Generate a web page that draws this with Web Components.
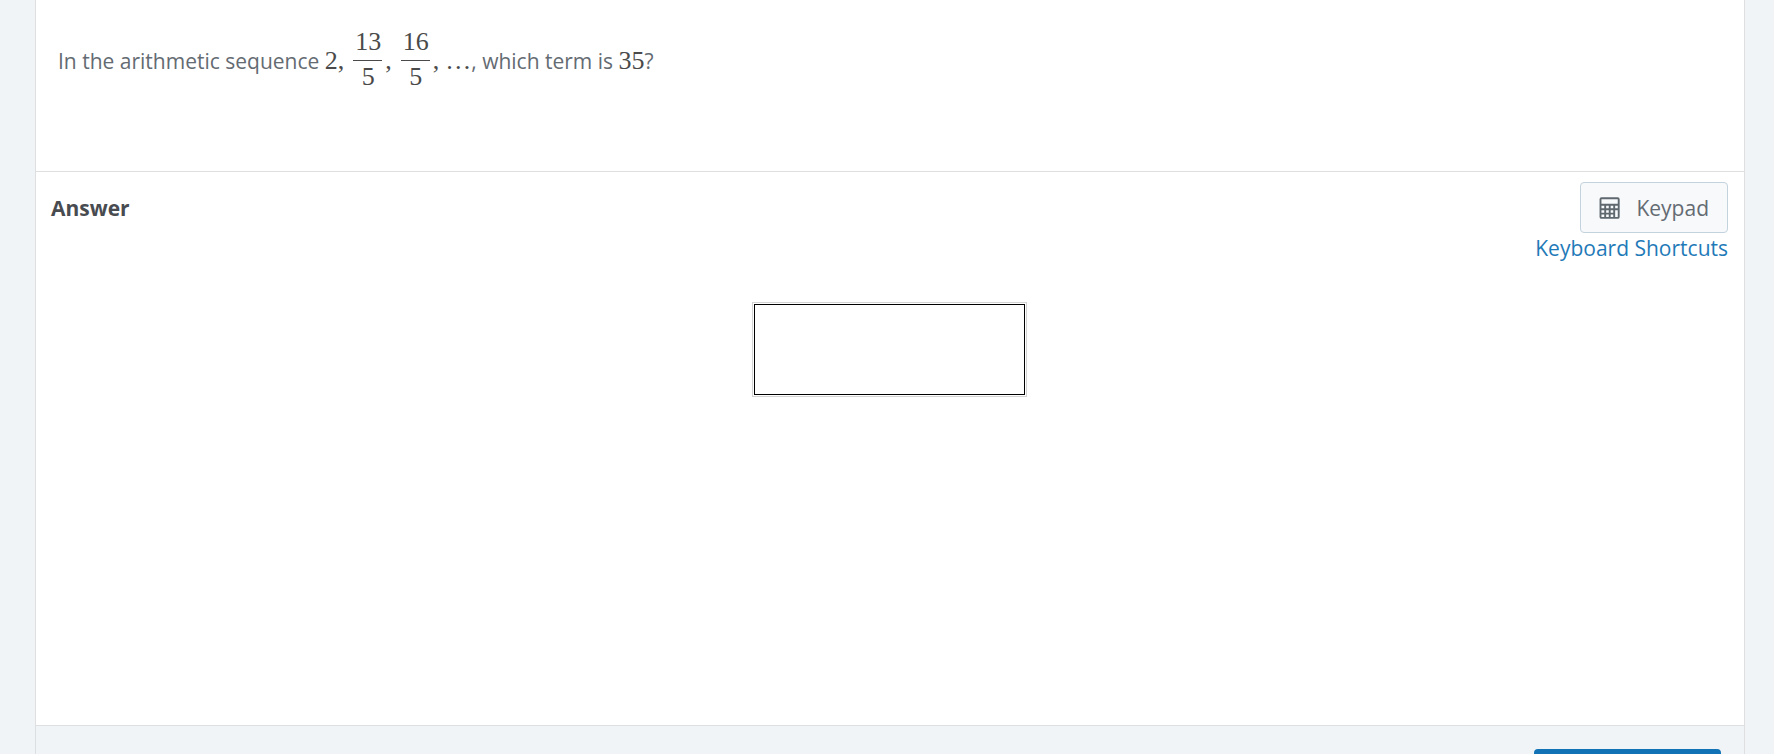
<!DOCTYPE html>
<html lang="en">
<head>
<meta charset="utf-8">
<title>Arithmetic sequence question</title>
<style>
  html, body { height: 100%; }
  body { margin: 0; background: #f0f4f7; font-family: "Open Sans", sans-serif; overflow: hidden; }
</style>
</head>
<body>
<question-card>
  <question-prompt slot="prompt">In the arithmetic sequence <math-text>2,<math-fraction><span slot="top">13</span><span slot="bottom">5</span></math-fraction>,<math-fraction><span slot="top">16</span><span slot="bottom">5</span></math-fraction>,<math-dots>…</math-dots></math-text>, which term is <math-text>35</math-text>?</question-prompt>
  <answer-panel></answer-panel>
  <card-footer slot="footer"></card-footer>
</question-card>
<script>
  const define = (name, html) => customElements.define(name, class extends HTMLElement {
    constructor() {
      super();
      this.attachShadow({ mode: "open" }).innerHTML = html;
    }
  });

  define("math-text", `
    <style>:host { display: inline; font-family: "Liberation Serif", serif; font-size: 26px; color: #4a4a4a; }</style>
    <slot></slot>`);

  define("math-dots", `
    <style>:host { display: inline-block; margin-left: 6px; }</style>
    <slot></slot>`);

  define("math-fraction", `
    <style>
      :host { display: inline-flex; flex-direction: column; vertical-align: middle; margin: 0 3px 0 9px; text-align: center; line-height: 28px; }
      .top { padding: 0 1px 4px 2px; border-bottom: 1px solid #4a4a4a; }
      .bottom { padding: 2px 1px 8px 2px; }
    </style>
    <div class="top"><slot name="top"></slot></div>
    <div class="bottom"><slot name="bottom"></slot></div>`);

  define("question-prompt", `
    <style>:host { display: block; font-size: 21px; color: #646b72; }</style>
    <slot></slot>`);

  define("keypad-button", `
    <style>
      :host { display: block; }
      button { display: flex; align-items: center; gap: 16px; height: 51px; padding: 0 18px 0 17px; border: 1px solid #c3d3dd; border-radius: 4px; background: #f7f9fb; color: #646b72; font: inherit; cursor: pointer; }
      svg { display: block; }
    </style>
    <button type="button">
      <svg width="22" height="22" viewBox="0 0 22 22" aria-hidden="true">
        <g fill="none" stroke="#5f686f">
          <rect x="2.5" y="1.3" width="18.2" height="19.6" rx="1" stroke-width="1.9"/>
          <path d="M3 7.8H21M3 12.2H21M3 16.6H16.4M7.2 7.8V21M11.7 7.8V21M16.2 7.8V21" stroke-width="1.9"/>
        </g>
      </svg>
      <slot></slot>
    </button>`);

  define("answer-panel", `
    <style>
      :host { display: block; padding: 10px 16px 0 15px; }
      header { display: flex; justify-content: space-between; align-items: flex-start; }
      label { font-size: 21px; line-height: 52px; font-weight: 700; color: #484b50; }
      .tools { display: flex; flex-direction: column; align-items: flex-end; font-size: 21px; line-height: 30px; }
      a { color: #1f7ab8; text-decoration: none; }
      .field { width: fit-content; margin: 39px auto 0; padding: 1px; border: 1px solid #d3d3d3; }
      input { display: block; box-sizing: border-box; width: 271px; height: 91px; padding: 0 16px; border: 1px solid #000; border-radius: 0; background: #fff; font: 26px "Liberation Serif", serif; outline: none; }
    </style>
    <header>
      <label for="answer">Answer</label>
      <div class="tools">
        <keypad-button>Keypad</keypad-button>
        <a href="#shortcuts">Keyboard Shortcuts</a>
      </div>
    </header>
    <div class="field"><input id="answer" type="text" autocomplete="off"></div>`);

  define("card-footer", `
    <style>
      :host { display: flex; justify-content: flex-end; padding: 23px 23px 0; border-top: 1px solid #dddfe1; background: #f0f4f7; }
      button { width: 187px; height: 50px; border: 0; border-radius: 4px; background: #1272b6; }
    </style>
    <button type="submit" aria-label="Submit answer"></button>`);

  define("question-card", `
    <style>
      :host { display: flex; flex-direction: column; box-sizing: border-box; min-height: 100%; margin: 0 29px 0 35px; border: solid #dddfe1; border-width: 0 1px; background: #fff; }
      .prompt { box-sizing: border-box; min-height: 172px; padding: 28px 22px; border-bottom: 1px solid #dddfe1; }
      .answer { min-height: 553px; }
      .footer { flex: 1; background: #f0f4f7; }
    </style>
    <section class="prompt"><slot name="prompt"></slot></section>
    <section class="answer"><slot></slot></section>
    <footer class="footer"><slot name="footer"></slot></footer>`);
</script>
</body>
</html>
